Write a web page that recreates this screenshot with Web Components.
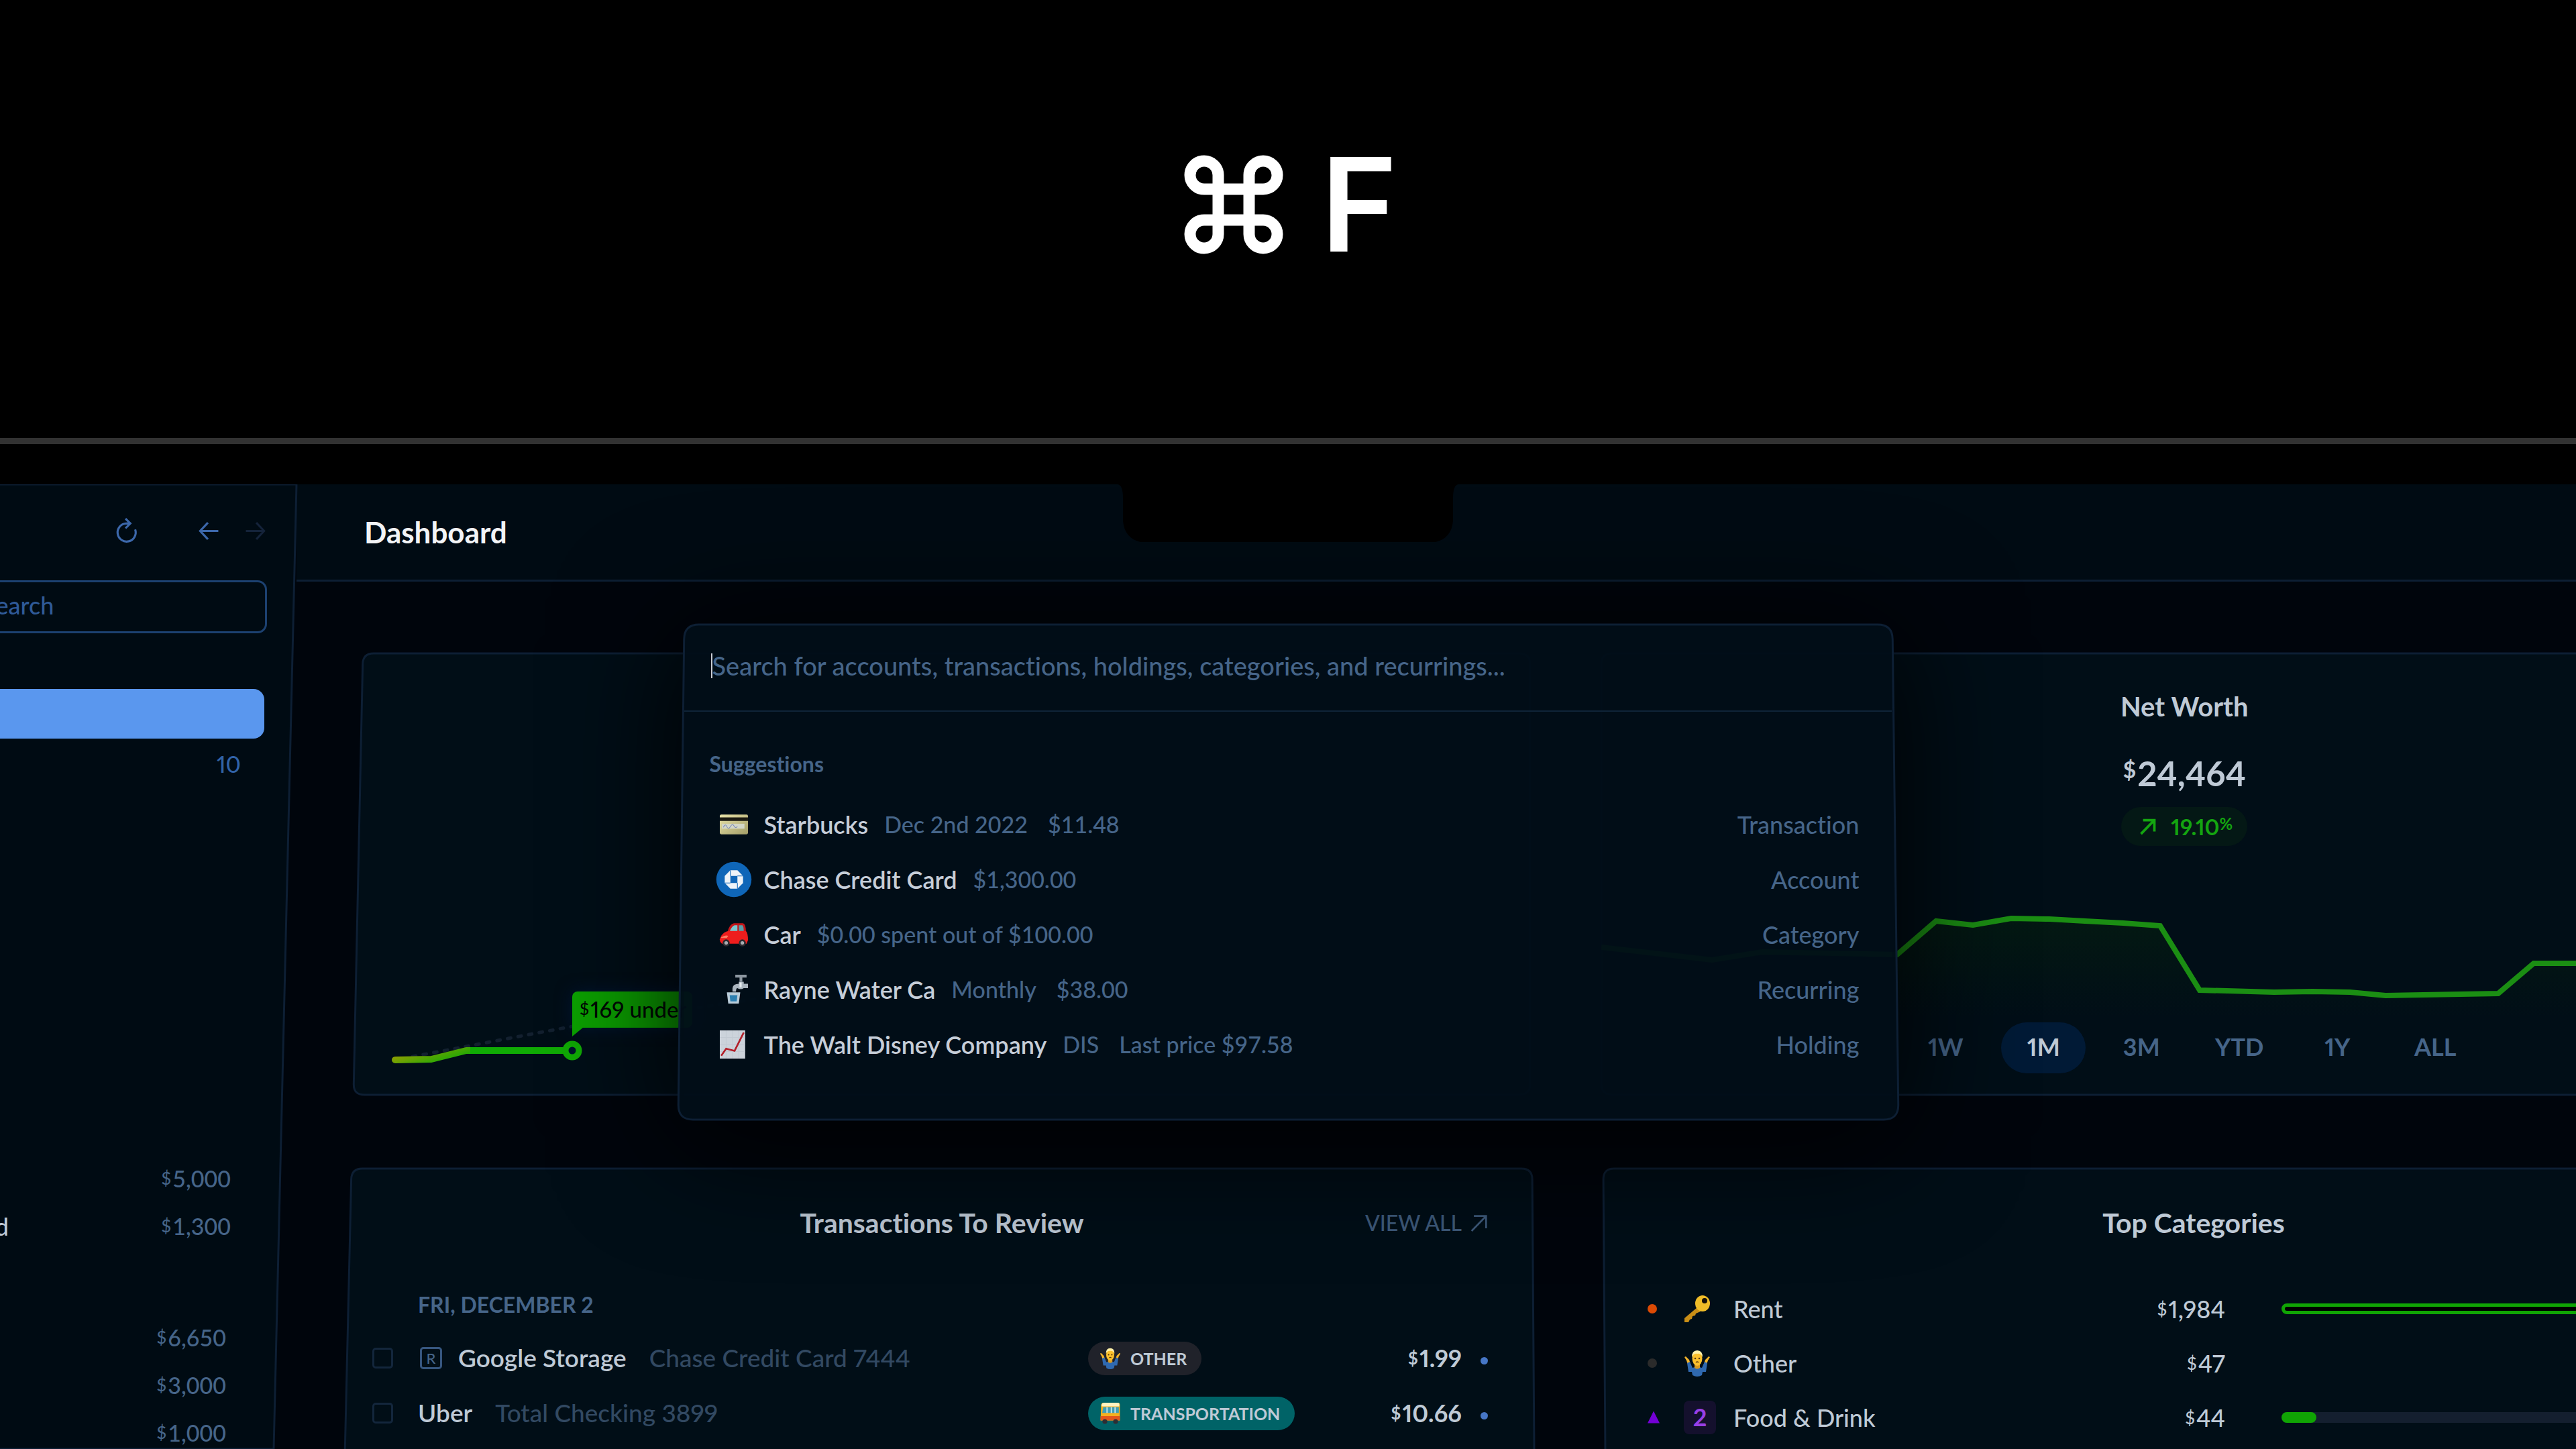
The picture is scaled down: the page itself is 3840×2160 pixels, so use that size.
<!DOCTYPE html>
<html lang="en">
<head>
<meta charset="utf-8">
<title>Dashboard</title>
<style>
	:root {
		--text: #bfcad6;
		--muted: #466589;
		--dim: #324962;
		--blue: #2f5a98;
		--green: #10a404;
		--line: #0d1f34;
		--panel: #010e17;
		--bar: #000b13;
		--page: #00050c;
	}
	* {
		box-sizing: border-box;
	}
	body {
		margin: 0;
		height: 100vh;
		overflow: hidden;
		display: flex;
		flex-direction: column;
		background: #000;
		color: var(--text);
		font: 36px/44px Lato, "Open Sans", sans-serif;
		font-weight: 500;
		font-variant-ligatures: none;
		font-variant-numeric: proportional-nums;
	}
</style>
</head>
<body>
	<key-combo>F</key-combo>
	<laptop-screen>
		<side-bar slot="side"></side-bar>
		<top-bar>Dashboard</top-bar>
		<card-row class="first">
			<spending-card></spending-card>
			<networth-card></networth-card>
		</card-row>
		<card-row class="second">
			<review-card></review-card>
			<categories-card></categories-card>
		</card-row>
		<search-palette slot="overlay">
			<search-result icon="card" name="Starbucks" kind="Transaction"><span>Dec 2nd 2022</span><span>$11.48</span></search-result>
			<search-result icon="chase" name="Chase Credit Card" kind="Account"><span>$1,300.00</span></search-result>
			<search-result icon="car" name="Car" kind="Category"><span>$0.00 spent out of $100.00</span></search-result>
			<search-result icon="tap" name="Rayne Water Ca" kind="Recurring"><span>Monthly</span><span>$38.00</span></search-result>
			<search-result icon="chart" name="The Walt Disney Company" kind="Holding"><span>DIS</span><span>Last price $97.58</span></search-result>
		</search-palette>
	</laptop-screen>

<script>
	const shrug = `
		<path d="M4 16 L1 11 L3 10 L8 15 L11 24 L9 30 Z" fill="#f4b52c"/>
		<path d="M36 16 L39 11 L37 10 L32 15 L29 24 L31 30 Z" fill="#f4b52c"/>
		<path d="M5 20 L9 18 L13 27 Q20 24 27 27 L31 18 L35 20 L33 33 L28 33 L27 38 Q20 42 13 38 L12 33 L7 33 Z" fill="#2f69b0"/>
		<path d="M16 22 H24 V27 Q20 30 16 27 Z" fill="#d99a1e"/>
		<ellipse cx="20" cy="13" rx="7.500" ry="11" fill="#fbc02d"/>
		<path d="M12 11 Q12 1 20 1 Q28 1 28 11 Q25 5 20 6 Q15 5 12 11 Z" fill="#fff0a8"/>
		<circle cx="17" cy="13" r="1.3" fill="#5b3a10"/>
		<circle cx="23" cy="13" r="1.3" fill="#5b3a10"/>
		<path d="M18 19 Q20 17 22 19" stroke="#5b3a10" stroke-width="1.5" fill="none"/>`;

	// every drawing sits in a 40 x 40 box
	const icons = {
		refresh: `<path d="M35 17 A15 15 0 1 1 20 7 H26 M19 -1 L27 7 L19 15" fill="none" stroke="currentColor" stroke-width="3.5"/>`,
		back: `<path d="M38 20 H3 M18 4 L3 20 L18 36" fill="none" stroke="currentColor" stroke-width="4"/>`,
		forward: `<path d="M2 20 H37 M22 4 L37 20 L22 36" fill="none" stroke="currentColor" stroke-width="4"/>`,
		out: `<path d="M4 37 L36 4 M9 4 H36 V31" fill="none" stroke="currentColor" stroke-width="var(--stroke, 4)"/>`,
		card: `
			<defs><linearGradient id="g" x2="1" y2="1"><stop stop-color="#e9e3a8"/><stop offset="1" stop-color="#a39d68"/></linearGradient></defs>
			<rect x="0" y="6" width="40" height="28" rx="2" fill="url(#g)"/>
			<rect x="0" y="10" width="40" height="5" fill="#1c1a12"/>
			<rect x="3" y="19" width="32" height="7" fill="#d3d6c8"/>
			<path d="M5 24 Q8 18 10 23 T15 23 T20 22 T25 23" stroke="#7d8bb8" fill="none"/>`,
		chase: `
			<circle cx="20" cy="20" r="25" fill="#0f66b8"/>
			<path d="M15 7 H25 L33 15 V25 L25 33 H15 L7 25 V15 Z" fill="#eef3f8"/>
			<rect x="15" y="15" width="10" height="10" fill="#0f66b8"/>
			<path d="M15 7 V15 M33 15 H25 M25 33 V25 M7 25 H15" stroke="#0f66b8" stroke-width="1"/>`,
		car: `
			<path d="M11 16 Q14 5 20 4 H33 Q37 5 37 16 Z" fill="#c3161a"/>
			<path d="M14 16 Q17 8 21 7 H25 V16 Z" fill="#7cc6cf"/>
			<path d="M27 7 H32 Q34 8 34 16 H27 Z" fill="#5a9da8"/>
			<path d="M2 22 Q6 16 13 15 H37 Q40 18 40 28 L38 33 H3 Q0 31 0 27 Z" fill="#ee1d1d"/>
			<path d="M2 24 Q8 20 12 22 L10 25 H1 Z" fill="#ff7b62"/>
			<circle cx="9" cy="32" r="5" fill="#2b2b30"/><circle cx="9" cy="32" r="2.500" fill="#a9adb3"/>
			<circle cx="32" cy="32" r="5" fill="#2b2b30"/><circle cx="32" cy="32" r="2.500" fill="#a9adb3"/>`,
		tap: `
			<path d="M22 1 H38 M30 1 V9" stroke="#8d97a1" stroke-width="4"/>
			<path d="M18 23 V18 Q19 12 27 12 V9 H34 V12 H40 V18 H34 Q30 21 25 18 Q23 18 23 23 Z" fill="#aab4be"/>
			<path d="M28 10 H31 V17 H28 Z" fill="#e6ebf0"/>
			<path d="M10 24 H29 L27 40 H12 Z" fill="#b9ccd9"/>
			<path d="M14 28 H25 L24 37 H15 Z" fill="#2c7fb0"/>`,
		chart: `
			<rect x="0" y="0" width="36" height="40" fill="#ccd3db"/>
			<path d="M0 10 H36 M0 20 H36 M0 30 H36 M9 0 V40 M18 0 V40 M27 0 V40" stroke="#c2cad3" stroke-width="1"/>
			<path d="M2 36 L9 26 L21 29 L34 3" fill="none" stroke="#b3202a" stroke-width="2.500"/>`,
		shrug,
		bus: `
			<path d="M3 4 Q4 0 8 0 H34 Q38 0 38 4 V33 H2 Z" fill="#f6b01e"/>
			<path d="M4 3 Q5 0 9 0 H33 Q37 0 37 3 V7 H4 Z" fill="#fff2c0"/>
			<path d="M7 8 H36 V19 H5 Z" fill="#3f9fb5"/>
			<path d="M14 8 V19 M22 8 V19 M29 8 V19" stroke="#d8edf0" stroke-width="2"/>
			<path d="M2 25 H38 V33 H2 Z" fill="#e2571c"/>
			<circle cx="10" cy="35" r="4.500" fill="#2d2d33"/><circle cx="30" cy="35" r="4.500" fill="#2d2d33"/>`,
		key: `
			<path d="M20 18 L1 34 V40 H7 L9 36 L12 35 L13 31 L17 30 L18 27 L25 24 Z" fill="#c98e16"/>
			<ellipse cx="28" cy="12" rx="11" ry="12" fill="#f0bd28"/>
			<circle cx="31" cy="8" r="4" fill="#151007"/>`
	};

	function define(name, html, setup) {
		customElements.define(name, class extends HTMLElement {
			connectedCallback() {
				if (this.shadowRoot) return;
				const root = this.attachShadow({ mode: "open" });
				root.innerHTML = `<style>* { box-sizing: border-box; } :host { display: block; }</style>` +
					(typeof html === "function" ? html(this) : html);
				if (setup) setup(this, root);
			}
		});
	}

	define("ui-icon", el => `
		<style>
			:host { display: inline-block; width: 40px; height: 40px; flex: none; }
			svg { display: block; width: 100%; height: 100%; overflow: visible; }
		</style>
		<svg viewBox="0 0 40 40" aria-hidden="true">${icons[el.getAttribute("name")]}</svg>
	`);

	define("money-amount", `
		<style>
			:host { display: inline-block; white-space: nowrap; }
			small { font-size: var(--sign, 26px); line-height: 1; vertical-align: var(--lift, 4px); margin-right: 2px; }
		</style>
		<small>$</small><slot></slot>
	`);

	// Box outline whose sides lean outwards towards the viewer.
	// left / right: how far the bottom corners move, in px
	define("lean-frame", `
		<style>
			:host { position: absolute; inset: 0; z-index: -1; pointer-events: none; }
			svg { position: absolute; width: 100%; height: 100%; overflow: visible; }
			path { fill: var(--fill, var(--panel)); stroke: var(--line); stroke-width: 3; }
		</style>
		<svg aria-hidden="true"><path/></svg>
	`, (el, root) => {
		const path = root.querySelector("path"),
			left = Number(el.getAttribute("left") || 0),
			right = Number(el.getAttribute("right") || 0),
			r = Number(el.getAttribute("radius") || 16);

		function draw() {
			const w = el.offsetWidth,
				h = el.offsetHeight,
				k = r / h;
			path.setAttribute("d", `M${r} 0 H${w - r} Q${w} 0 ${w + right * k} ${r}
				L${w + right * (1 - k)} ${h - r} Q${w + right} ${h} ${w + right - r} ${h}
				H${left + r} Q${left} ${h} ${left * (1 - k)} ${h - r}
				L${left * k} ${r} Q0 0 ${r} 0 Z`);
		}
		new ResizeObserver(draw).observe(el);
		draw();
	});

	define("key-combo", `
		<style>
			:host {
				flex: none;
				display: flex;
				justify-content: center;
				align-items: center;
				gap: 56px;
				height: 653px;
				padding: 0 0 44px 8px;
				color: #fff;
				font: 600 194px/194px Inter, sans-serif;
			}
			svg { width: 148px; height: 148px; }
			kbd { font: inherit; }
		</style>
		<svg viewBox="0 0 148 148" role="img" aria-label="Command">
			<path d="M51 30 A21 21 0 1 0 30 51 H118 A21 21 0 1 0 97 30 V118 A21 21 0 1 0 118 97 H30 A21 21 0 1 0 51 118 Z"
				fill="none" stroke="#fff" stroke-width="17"/>
		</svg>
		<kbd><slot></slot></kbd>
	`);

	define("laptop-screen", `
		<style>
			:host {
				flex: 1;
				min-height: 0;
				border-top: 9px solid #323232;
				padding-top: 60px;
				display: flex;
			}
			.display {
				flex: 1;
				min-width: 0;
				display: flex;
				position: relative;
				overflow: hidden;
				background: var(--page);
			}
			main { flex: 1; min-width: 0; }
			.notch {
				position: absolute;
				top: 0;
				left: 0;
				right: 0;
				margin: 0 auto;
				width: 508px;
				height: 86px;
				display: block;
			}
		</style>
		<div class="display">
			<slot name="side"></slot>
			<main><slot></slot></main>
			<svg class="notch" viewBox="0 0 508 86" aria-hidden="true">
				<path d="M0 0 Q8 1 8 20 V54 Q10 80 34 86 H474 Q498 80 500 54 V20 Q500 1 508 0 Z"/>
			</svg>
			<slot name="overlay"></slot>
		</div>
	`);

	define("side-bar", `
		<style>
			:host {
				flex: none;
				width: 442px;
				display: flex;
				justify-content: flex-end;
				position: relative;
				z-index: 0;
				color: var(--muted);
			}
			lean-frame { left: -20px; }
			.inner { flex: none; width: 600px; padding-right: 44px; }
			.tools {
				display: flex;
				justify-content: flex-end;
				align-items: center;
				gap: 38px;
				height: 143px;
				padding: 0 2px 4px 0;
			}
			button {
				border: 0;
				padding: 0;
				background: none;
				color: #3c68ab;
				line-height: 0;
			}
			button ui-icon { width: 31px; height: 31px; }
			button ui-icon[name="refresh"] { width: 36px; height: 36px; }
			button:first-child { margin-right: 52px; }
			button:disabled { color: #14233a; }
			input {
				display: block;
				width: 100%;
				height: 79px;
				padding: 0 0 6px 129px;
				border: 3px solid #1c4170;
				border-radius: 14px;
				background: none;
				color: var(--blue);
				font: inherit;
				outline: 0;
			}
			input::placeholder { color: var(--blue); opacity: 1; }
			nav { margin: 83px 4px 0 0; }
			nav a {
				display: flex;
				justify-content: flex-end;
				align-items: center;
				height: 76px;
				padding-right: 35px;
				color: #3163a8;
				font-size: 34px;
				text-decoration: none;
			}
			nav a.current { height: 74px; border-radius: 16px; background: #5a97ee; }
			ul { list-style: none; margin: 0; padding: 0; }
			li { display: flex; align-items: center; height: 71px; }
			li span { flex: 0 0 171px; text-align: right; color: var(--text); }
			li money-amount { margin-left: auto; font-size: 34px; font-variant-numeric: normal; }
			.bank { margin: 544px 54px 95px 0; }
			.invested { margin-right: 61px; }
		</style>
		<lean-frame right="-34" radius="1" style="--fill: var(--bar)"></lean-frame>
		<div class="inner">
			<div class="tools">
				<button aria-label="Refresh"><ui-icon name="refresh"></ui-icon></button>
				<button aria-label="Back"><ui-icon name="back"></ui-icon></button>
				<button aria-label="Forward" disabled><ui-icon name="forward"></ui-icon></button>
			</div>
			<input type="search" placeholder="Search" aria-label="Search">
			<nav>
				<a class="current" href="#dashboard" aria-label="Dashboard"></a>
				<a href="#transactions">10</a>
			</nav>
			<ul class="bank">
				<li><money-amount>5,000</money-amount></li>
				<li><span>Card</span><money-amount>1,300</money-amount></li>
			</ul>
			<ul class="invested">
				<li><money-amount>6,650</money-amount></li>
				<li><money-amount>3,000</money-amount></li>
				<li><money-amount>1,000</money-amount></li>
			</ul>
		</div>
	`);

	define("top-bar", `
		<style>
			:host {
				height: 145px;
				padding: 0 101px;
				border-bottom: 3px solid var(--line);
				background: var(--bar);
			}
			h1 { margin: 0; color: #f2f4f6; font-size: 44px; line-height: 142px; font-weight: 700; }
		</style>
		<h1><slot></slot></h1>
	`);

	// The right hand card of each row runs off the screen
	define("card-row", `
		<style>
			:host { display: grid; grid-template-columns: 1fr 1fr; gap: 106px; }
			:host(.first) { margin: 107px -286px 0 99px; }
			:host(.second) { margin: 110px -310px 0 82px; }
		</style>
		<slot></slot>
	`);

	const cardStyle = `
		:host { position: relative; z-index: 0; min-width: 0; }
		h2 { margin: 0; text-align: center; font-size: 41px; line-height: 46px; font-weight: 700; }
	`;

	define("spending-card", `
		<style>
			${cardStyle}
			:host { height: 658px; display: flex; flex-direction: column; padding-top: 56px; }
			h2, p { color: #000; }
			p { margin: 48px 0 0; text-align: center; font-size: 50px; line-height: 60px; font-weight: 700; --sign: 32px; --lift: 12px; }
			.plot { position: relative; margin-top: auto; height: 180px; }
			svg { width: 100%; height: 100%; }
			.tip {
				position: absolute;
				left: 312px;
				top: 26px;
				height: 54px;
				padding: 0 8px 0 11px;
				border-radius: 8px 8px 8px 0;
				background: #0ba000;
				color: #000a04;
				font-size: 33px;
				line-height: 52px;
				box-shadow: 0 0 24px #001433;
				--sign: 25px;
			}
			.tip::after {
				content: "";
				position: absolute;
				left: 0;
				top: 53px;
				border-top: 14px solid #0ba000;
				border-right: 17px solid transparent;
			}
		</style>
		<lean-frame left="-14"></lean-frame>
		<h2>Monthly Spending</h2>
		<p><money-amount>1,407</money-amount> left</p>
		<div class="plot">
			<svg aria-hidden="true">
				<defs>
					<linearGradient id="g" gradientUnits="userSpaceOnUse" x1="46" y1="112" x2="60" y2="156">
						<stop stop-color="#b39b00"/><stop offset="1" stop-color="#10ab05"/>
					</linearGradient>
				</defs>
				<path d="M74 123 L312 78 L700 20" fill="none" stroke="#13202f" stroke-width="5" stroke-dasharray="5 11" stroke-linecap="round"/>
				<path d="M48 128 L102 127 L154 114 H312" fill="none" stroke="url(#g)" stroke-width="10" stroke-linecap="round" stroke-linejoin="round"/>
				<path d="M160 114 H304" stroke="#10ab05" stroke-width="10"/>
				<circle cx="312" cy="114" r="10" fill="#00142c" stroke="#10a905" stroke-width="9"/>
			</svg>
			<div class="tip"><money-amount>169</money-amount> under</div>
		</div>
	`);

	define("networth-card", `
		<style>
			${cardStyle}
			:host { height: 658px; display: flex; flex-direction: column; align-items: center; padding-top: 56px; }
			h2 { font-size: 40px; }
			.total { margin-top: 47px; font-size: 51px; line-height: 60px; font-weight: 700; --sign: 34px; --lift: 12px; }
			.change {
				display: flex;
				align-items: center;
				gap: 22px;
				height: 58px;
				margin-top: 20px;
				padding: 0 22px 0 27px;
				border-radius: 29px;
				background: #041815;
				color: #14a510;
				font-size: 33px;
				font-weight: 700;
			}
			.change ui-icon { width: 25px; height: 25px; --stroke: 6; }
			.change sup { font-size: 24px; line-height: 1; vertical-align: 8px; }
			svg { width: 100%; height: 172px; margin-top: 84px; overflow: hidden; }
			nav { display: flex; padding-left: 18px; margin-top: 7px; }
			button {
				width: 126px;
				height: 76px;
				margin: 0 10px;
				padding: 0 0 4px;
				border: 0;
				border-radius: 38px;
				background: none;
				color: var(--muted);
				font: inherit;
				font-weight: 700;
			}
			button[aria-pressed] { background: #011a36; color: var(--text); }
		</style>
		<lean-frame></lean-frame>
		<h2>Net Worth</h2>
		<money-amount class="total">24,464</money-amount>
		<div class="change"><ui-icon name="out"></ui-icon><span>19.10<sup>%</sup></span></div>
		<svg aria-hidden="true">
			<defs>
				<linearGradient id="g" x2="0" y2="1"><stop stop-color="#05200f" stop-opacity=".6"/><stop offset="1" stop-color="#05200f" stop-opacity="0"/></linearGradient>
			</defs>
			<path d="M0 67 L165 86 L240 74 L441 78 L499 28 L554 34 L611 24 L668 25 L721 28 L778 31 L833 35 L892 131 L1003 134 L1060 133 L1116 134 L1169 139 L1337 136 L1390 91 H1760 V172 H0 Z" fill="url(#g)"/>
			<path d="M0 67 L165 86 L240 74 L441 78 L499 28 L554 34 L611 24 L668 25 L721 28 L778 31 L833 35 L892 131 L1003 134 L1060 133 L1116 134 L1169 139 L1337 136 L1390 91 H1760" fill="none" stroke="#1b8e13" stroke-width="8"/>
		</svg>
		<nav>
			<button>1W</button>
			<button aria-pressed="true">1M</button>
			<button>3M</button>
			<button>YTD</button>
			<button>1Y</button>
			<button>ALL</button>
		</nav>
	`);

	define("category-pill", el => `
		<style>
			:host {
				display: inline-flex;
				align-items: center;
				gap: 14px;
				height: 50px;
				padding: 0 22px 0 17px;
				border-radius: 25px;
				background: ${el.getAttribute("color")};
				font-size: 25px;
				line-height: 50px;
				font-weight: 700;
				vertical-align: middle;
			}
			ui-icon { width: 32px; height: 32px; }
		</style>
		<ui-icon name="${el.getAttribute("icon")}"></ui-icon><slot></slot>
	`);

	define("review-card", `
		<style>
			${cardStyle}
			:host { height: 560px; padding: 58px 66px 0 31px; }
			header { display: grid; grid-template-columns: 1fr auto 1fr; align-items: center; padding-left: 35px; }
			header h2 { grid-column: 2; }
			header a {
				justify-self: end;
				display: flex;
				align-items: center;
				gap: 12px;
				color: #3d597a;
				font-size: 32px;
				font-weight: 500;
				text-decoration: none;
			}
			header ui-icon { width: 27px; height: 27px; }
			table { width: 100%; margin-top: 70px; border-collapse: collapse; table-layout: fixed; font-size: 37px; }
			th, td { height: 82px; padding: 0; text-align: left; white-space: nowrap; }
			tr:first-child th { height: 67px; color: var(--muted); font-size: 32px; line-height: 58px; font-weight: 700; vertical-align: top; }
			.check { width: 68px; }
			.tag { width: 320px; }
			.sum { width: 237px; text-align: right; font-weight: 700; }
			.dot { width: 39px; text-align: right; }
			.dot i { display: inline-block; width: 11px; height: 11px; border-radius: 50%; background: #4676c6; vertical-align: middle; }
			input {
				appearance: none;
				display: block;
				width: 31px;
				height: 31px;
				margin: 0;
				border: 3px solid #13263c;
				border-radius: 5px;
			}
			td.sum { font-size: 36px; }
			.name { display: flex; align-items: center; gap: 34px; }
			.name b { font-weight: 600; }
			.name span { color: var(--dim); }
			.name abbr {
				width: 33px;
				height: 33px;
				margin: 0 -10px 0 3px;
				border: 3px solid #36567f;
				border-radius: 5px;
				color: var(--muted);
				font-size: 22px;
				line-height: 27px;
				text-align: center;
			}
		</style>
		<lean-frame left="-13" right="4"></lean-frame>
		<header>
			<h2>Transactions To Review</h2>
			<a href="#review">VIEW ALL<ui-icon name="out"></ui-icon></a>
		</header>
		<table>
			<colgroup><col class="check"><col><col class="tag"><col class="sum"><col class="dot"></colgroup>
			<tbody>
				<tr><th></th><th colspan="4">FRI, DECEMBER 2</th></tr>
				<tr>
					<td><input type="checkbox" aria-label="Google Storage reviewed"></td>
					<td><div class="name"><abbr>R</abbr><b>Google Storage</b><span>Chase Credit Card 7444</span></div></td>
					<td><category-pill icon="shrug" color="#20222a">OTHER</category-pill></td>
					<td class="sum"><money-amount>1.99</money-amount></td>
					<td class="dot"><i></i></td>
				</tr>
				<tr>
					<td><input type="checkbox" aria-label="Uber reviewed"></td>
					<td><div class="name"><b>Uber</b><span>Total Checking 3899</span></div></td>
					<td><category-pill icon="bus" color="#006367">TRANSPORTATION</category-pill></td>
					<td class="sum"><money-amount>10.66</money-amount></td>
					<td class="dot"><i></i></td>
				</tr>
			</tbody>
		</table>
	`);

	define("categories-card", `
		<style>
			${cardStyle}
			:host { height: 560px; padding: 58px 66px 0; }
			table { width: 100%; margin-top: 64px; border-collapse: collapse; table-layout: fixed; }
			td { height: 81px; padding: 0; white-space: nowrap; }
			.mark { width: 54px; }
			.icon { width: 74px; }
			.label { width: 433px; }
			.sum { width: 300px; text-align: right; }
			.bar { padding-left: 84px; }
			td i { display: block; width: 14px; height: 14px; border-radius: 50%; }
			td i.up { width: 18px; height: 18px; border-radius: 0; clip-path: polygon(50% 0, 100% 100%, 0 100%); }
			ui-icon { display: block; }
			.count {
				display: block;
				width: 48px;
				height: 50px;
				border-radius: 8px;
				background: #14102d;
				color: #983fe6;
				line-height: 48px;
				text-align: center;
				font-weight: 700;
			}
			.meter { height: 16px; border-radius: 8px; background: #141f2f; }
			.meter.over { border: 5px solid var(--green); background: #000; }
			.meter span { display: block; width: 52px; height: 16px; border-radius: 8px; background: var(--green); }
		</style>
		<lean-frame left="4"></lean-frame>
		<h2>Top Categories</h2>
		<table>
			<colgroup><col class="mark"><col class="icon"><col class="label"><col class="sum"><col></colgroup>
			<tbody>
				<tr>
					<td><i style="background: #dc4a04"></i></td>
					<td><ui-icon name="key"></ui-icon></td>
					<td>Rent</td>
					<td class="sum"><money-amount>1,984</money-amount></td>
					<td class="bar"><div class="meter over"></div></td>
				</tr>
				<tr>
					<td><i style="background: #2b2b2b"></i></td>
					<td><ui-icon name="shrug"></ui-icon></td>
					<td>Other</td>
					<td class="sum"><money-amount>47</money-amount></td>
					<td></td>
				</tr>
				<tr>
					<td><i class="up" style="background: #7400d6"></i></td>
					<td><span class="count">2</span></td>
					<td>Food &amp; Drink</td>
					<td class="sum"><money-amount>44</money-amount></td>
					<td class="bar"><div class="meter"><span></span></div></td>
				</tr>
			</tbody>
		</table>
	`);

	define("search-result", el => `
		<style>
			:host { display: flex; align-items: center; gap: 24px; height: 82px; color: var(--muted); }
			ui-icon { width: 42px; height: 42px; }
			b { color: #c6cdd8; font-weight: 600; }
			p { display: flex; gap: 30px; margin: 0; font-size: 34px; font-variant-numeric: normal; }
			em { margin-left: auto; font-style: normal; }
		</style>
		<ui-icon name="${el.getAttribute("icon")}"></ui-icon>
		<b>${el.getAttribute("name")}</b>
		<p><slot></slot></p>
		<em>${el.getAttribute("kind")}</em>
	`);

	define("search-palette", `
		<style>
			:host {
				position: absolute;
				z-index: 2;
				top: 209px;
				left: 0;
				right: 0;
				margin: 0 auto;
				width: 46.9%;
				height: 738px;
				border-radius: 24px;
				box-shadow: 0 20px 180px 10px rgba(0, 0, 0, .9);
				--fill: rgba(1, 14, 24, .96);
			}
			label { display: flex; align-items: center; height: 130px; padding: 0 40px 6px; border-bottom: 2px solid #0f2438; }
			.caret { width: 2px; height: 37px; background: #c9ced6; }
			input {
				flex: 1;
				padding: 0;
				border: 0;
				background: none;
				color: var(--text);
				font: inherit;
				font-size: 38px;
				outline: 0;
			}
			input::placeholder { color: var(--muted); opacity: 1; }
			h3 { margin: 56px 38px 27px; color: var(--muted); font-size: 32px; line-height: 44px; font-weight: 700; }
			section { margin: 0 49px 0 53px; }
		</style>
		<lean-frame left="-9" right="9" radius="22"></lean-frame>
		<label>
			<span class="caret"></span>
			<input type="text" placeholder="Search for accounts, transactions, holdings, categories, and recurrings..." aria-label="Search everything">
		</label>
		<h3>Suggestions</h3>
		<section><slot></slot></section>
	`);
</script>
</body>
</html>
